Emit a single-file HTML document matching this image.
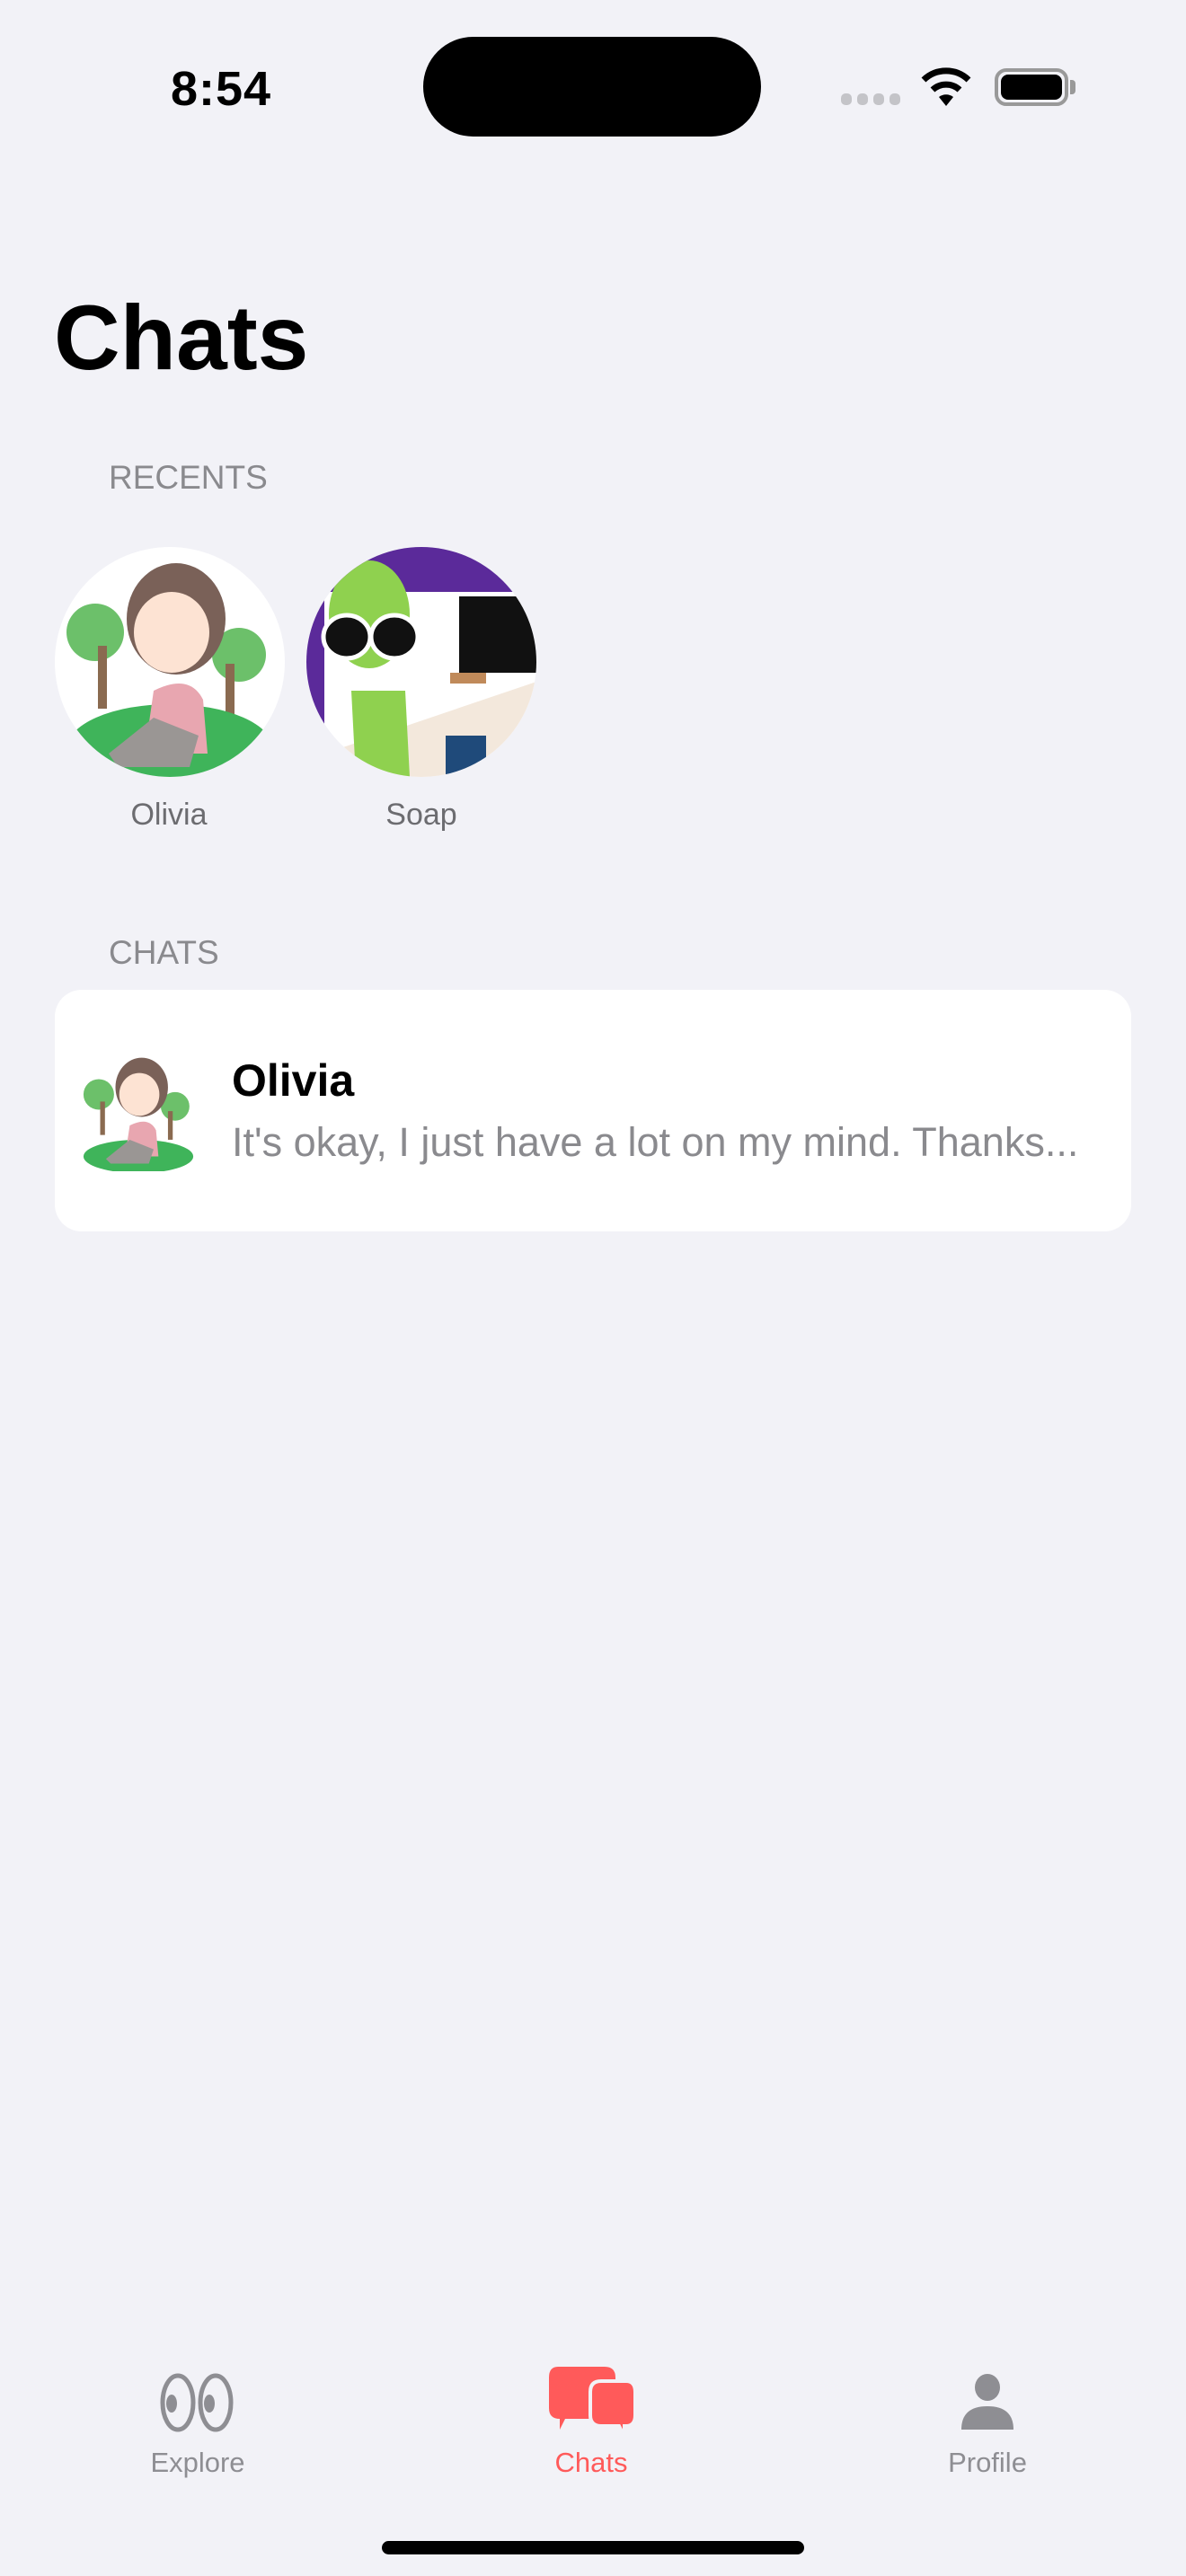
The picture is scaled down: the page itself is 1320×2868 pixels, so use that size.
<!DOCTYPE html>
<html><head><meta charset="utf-8"><style>
*{margin:0;padding:0;box-sizing:border-box}
body{width:1320px;height:2868px;background:#f2f2f7;font-family:"Liberation Sans",sans-serif;position:relative;overflow:hidden}
.a{position:absolute}
</style></head><body>
<div class="a" style="left:190px;top:68px;font-size:54px;font-weight:bold;letter-spacing:1px">8:54</div>
<div class="a" style="left:471px;top:41px;width:376px;height:111px;background:#000;border-radius:56px"></div>
<div class="a" style="left:936px;top:104px;width:66px;height:13px">
 <div class="a" style="left:0;width:12px;height:13px;border-radius:5px;background:#c4c4c8"></div>
 <div class="a" style="left:18px;width:12px;height:13px;border-radius:5px;background:#c4c4c8"></div>
 <div class="a" style="left:36px;width:12px;height:13px;border-radius:5px;background:#c4c4c8"></div>
 <div class="a" style="left:54px;width:12px;height:13px;border-radius:5px;background:#c4c4c8"></div>
</div>
<svg class="a" style="left:1022px;top:74px" width="62" height="46" viewBox="0 0 62 46">
 <path d="M31 44 L23 34 A13 13 0 0 1 39 34 Z" fill="#000"/>
 <path d="M16 26 A22 22 0 0 1 46 26" stroke="#000" stroke-width="7" fill="none"/>
 <path d="M6 15 A36 36 0 0 1 56 15" stroke="#000" stroke-width="7" fill="none"/>
</svg>
<div class="a" style="left:1107px;top:76px;width:82px;height:42px;border:4px solid #999;border-radius:13px"></div>
<div class="a" style="left:1114px;top:83px;width:68px;height:28px;background:#000;border-radius:8px"></div>
<div class="a" style="left:1191px;top:89px;width:6px;height:16px;background:#999;border-radius:0 4px 4px 0"></div>

<div class="a" style="left:60px;top:318px;font-size:102px;font-weight:bold">Chats</div>
<div class="a" style="left:121px;top:511px;font-size:37px;color:#8a8a8e">RECENTS</div>

<svg class="a" style="left:61px;top:609px" width="256" height="256" viewBox="0 0 256 256">
 <defs><clipPath id="c1"><circle cx="128" cy="128" r="128"/></clipPath></defs>
 <g clip-path="url(#c1)">
 <rect width="256" height="256" fill="#fff"/>
 <circle cx="45" cy="95" r="32" fill="#6cc06a"/><rect x="48" y="110" width="10" height="70" fill="#8a6a50"/>
 <circle cx="205" cy="120" r="30" fill="#6cc06a"/><rect x="190" y="130" width="10" height="60" fill="#8a6a50"/>
 <ellipse cx="128" cy="225" rx="115" ry="50" fill="#3fb45a"/>
 <ellipse cx="135" cy="80" rx="55" ry="62" fill="#7a6158"/>
 <ellipse cx="130" cy="95" rx="42" ry="45" fill="#fde3d3"/>
 <path d="M110 160 Q150 140 165 170 L170 230 L100 230 Z" fill="#e8a6b0"/>
 <path d="M60 230 L110 190 L160 210 L150 245 L70 245Z" fill="#9a9694"/>
 </g>
</svg>
<svg class="a" style="left:341px;top:609px" width="256" height="256" viewBox="0 0 256 256">
 <defs><clipPath id="c2"><circle cx="128" cy="128" r="128"/></clipPath></defs>
 <g clip-path="url(#c2)">
 <rect width="256" height="256" fill="#fff"/>
 <rect width="256" height="50" fill="#5b2a9a"/>
 <rect x="0" y="50" width="20" height="200" fill="#5b2a9a"/>
 <rect x="170" y="55" width="86" height="85" fill="#111"/>
 <path d="M20 230 L256 150 L256 256 L20 256Z" fill="#f3e8dc"/>
 <ellipse cx="70" cy="75" rx="45" ry="60" fill="#8fd14f"/>
 <ellipse cx="45" cy="100" rx="26" ry="24" fill="#111" stroke="#fff" stroke-width="5"/>
 <ellipse cx="98" cy="100" rx="26" ry="24" fill="#111" stroke="#fff" stroke-width="5"/>
 <path d="M50 160 L110 160 L115 256 L55 256Z" fill="#8fd14f"/>
 <rect x="155" y="210" width="45" height="50" fill="#1f4a7a"/>
 <rect x="160" y="140" width="40" height="12" fill="#c08a5a"/>
 </g>
</svg>
<div class="a" style="left:88px;top:888px;width:200px;text-align:center;font-size:34px;color:#6c6c70">Olivia</div>
<div class="a" style="left:369px;top:888px;width:200px;text-align:center;font-size:34px;color:#6c6c70">Soap</div>

<div class="a" style="left:121px;top:1040px;font-size:37px;color:#8a8a8e">CHATS</div>
<div class="a" style="left:61px;top:1102px;width:1198px;height:269px;background:#fff;border-radius:30px"></div>
<svg class="a" style="left:86px;top:1168px" width="136" height="136" viewBox="0 0 256 256">
 <circle cx="45" cy="95" r="32" fill="#6cc06a"/><rect x="48" y="110" width="10" height="70" fill="#8a6a50"/>
 <circle cx="205" cy="120" r="30" fill="#6cc06a"/><rect x="190" y="130" width="10" height="60" fill="#8a6a50"/>
 <ellipse cx="128" cy="225" rx="115" ry="35" fill="#3fb45a"/>
 <ellipse cx="135" cy="80" rx="55" ry="62" fill="#7a6158"/>
 <ellipse cx="130" cy="95" rx="42" ry="45" fill="#fde3d3"/>
 <path d="M110 160 Q150 140 165 170 L170 225 L100 225 Z" fill="#e8a6b0"/>
 <path d="M60 230 L110 190 L160 210 L150 240 L70 240Z" fill="#9a9694"/>
</svg>
<div class="a" style="left:258px;top:1174px;font-size:50px;font-weight:bold;color:#000">Olivia</div>
<div class="a" style="left:258px;top:1246px;font-size:45px;color:#8a8a8e;white-space:nowrap">It's okay, I just have a lot on my mind. Thanks...</div>

<svg class="a" style="left:178px;top:2642px" width="82" height="66" viewBox="0 0 82 66">
 <ellipse cx="20" cy="33" rx="17" ry="30" fill="none" stroke="#8e8e93" stroke-width="5"/>
 <ellipse cx="62" cy="33" rx="17" ry="30" fill="none" stroke="#8e8e93" stroke-width="5"/>
 <ellipse cx="13" cy="34" rx="6" ry="10" fill="#8e8e93"/>
 <ellipse cx="55" cy="34" rx="6" ry="10" fill="#8e8e93"/>
</svg>
<div class="a" style="left:120px;top:2724px;width:200px;text-align:center;font-size:31px;color:#8e8e93">Explore</div>
<svg class="a" style="left:609px;top:2635px" width="100" height="80" viewBox="0 0 100 80">
 <path d="M12 0 H64 Q76 0 76 12 V58 H20 L14 70 V58 Q2 58 2 46 V12 Q2 0 12 0Z" fill="#ff5a5a"/>
 <path d="M60 16 H88 Q98 16 98 28 V54 Q98 66 88 66 H86 V78 L80 66 H60 Q48 66 48 54 V28 Q48 16 60 16Z" fill="#ff5a5a" stroke="#f2f2f7" stroke-width="4"/>
</svg>
<div class="a" style="left:558px;top:2724px;width:200px;text-align:center;font-size:31px;color:#ff5a5a">Chats</div>
<svg class="a" style="left:1068px;top:2643px" width="62" height="64" viewBox="0 0 62 64">
 <ellipse cx="31" cy="15" rx="14" ry="15" fill="#8e8e93"/>
 <path d="M2 62 Q2 36 31 36 Q60 36 60 62 Z" fill="#8e8e93"/>
</svg>
<div class="a" style="left:999px;top:2724px;width:200px;text-align:center;font-size:31px;color:#8e8e93">Profile</div>
<div class="a" style="left:425px;top:2829px;width:470px;height:15px;background:#000;border-radius:8px"></div>
</body></html>
